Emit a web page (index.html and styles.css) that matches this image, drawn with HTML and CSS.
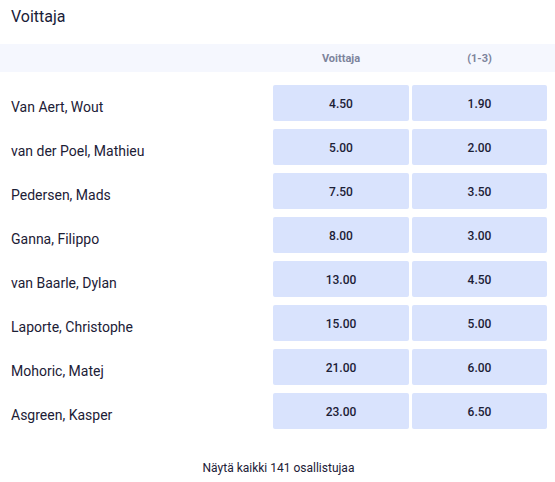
FILE: index.html
```html
<!DOCTYPE html>
<html>
<head>
<meta charset="utf-8">
<link rel="stylesheet" href="styles.css">
</head>
<body>
<div class="market">
  <h2 class="title">Voittaja</h2>
  <div class="grid head">
    <div></div>
    <div class="col-label">Voittaja</div>
    <div class="col-label">(1-3)</div>
  </div>
  <div class="rows">
    <div class="grid row"><div class="name">Van Aert, Wout</div><div class="odd">4.50</div><div class="odd">1.90</div></div>
    <div class="grid row"><div class="name">van der Poel, Mathieu</div><div class="odd">5.00</div><div class="odd">2.00</div></div>
    <div class="grid row"><div class="name">Pedersen, Mads</div><div class="odd">7.50</div><div class="odd">3.50</div></div>
    <div class="grid row"><div class="name">Ganna, Filippo</div><div class="odd">8.00</div><div class="odd">3.00</div></div>
    <div class="grid row"><div class="name">van Baarle, Dylan</div><div class="odd">13.00</div><div class="odd">4.50</div></div>
    <div class="grid row"><div class="name">Laporte, Christophe</div><div class="odd">15.00</div><div class="odd">5.00</div></div>
    <div class="grid row"><div class="name">Mohoric, Matej</div><div class="odd">21.00</div><div class="odd">6.00</div></div>
    <div class="grid row"><div class="name">Asgreen, Kasper</div><div class="odd">23.00</div><div class="odd">6.50</div></div>
  </div>
  <div class="more">Näytä kaikki 141 osallistujaa</div>
</div>
</body>
</html>
```
FILE: styles.css
```css
* { box-sizing: border-box; }
html, body { margin: 0; padding: 0; background: #fff; }
body { font-family: Roboto, "Noto Sans", sans-serif; color: #1c2036; }
.market { width: 555px; }
.title {
  margin: 0;
  height: 44px;
  padding: 6px 0 0 11px;
  font-size: 16px;
  font-weight: 400;
  line-height: 22px;
  color: #1a2038;
}
.grid {
  display: grid;
  grid-template-columns: 1fr 136px 135px;
  column-gap: 3px;
  padding: 0 8px 0 11px;
}
.head {
  background: #f5f7fe;
  height: 28px;
  align-items: center;
}
.col-label {
  text-align: center;
  font-size: 11px;
  font-weight: 700;
  color: #7d849c;
}
.rows {
  display: flex;
  flex-direction: column;
  gap: 8px;
  padding-top: 13px;
}
.row { height: 36px; align-items: center; }
.name { font-size: 14px; line-height: 16px; color: #1c2036; padding-top: 8px; }
.odd {
  height: 36px;
  background: #d9e3fd;
  border-radius: 2px;
  display: flex;
  align-items: center;
  justify-content: center;
  font-size: 12px;
  font-weight: 500;
  line-height: 14px;
  padding-top: 1px;
  color: #1c2036;
}
.more {
  text-align: center;
  font-size: 12px;
  color: #1c2036;
  padding: 31px 0 0 2px;
  line-height: 16px;
}
```
